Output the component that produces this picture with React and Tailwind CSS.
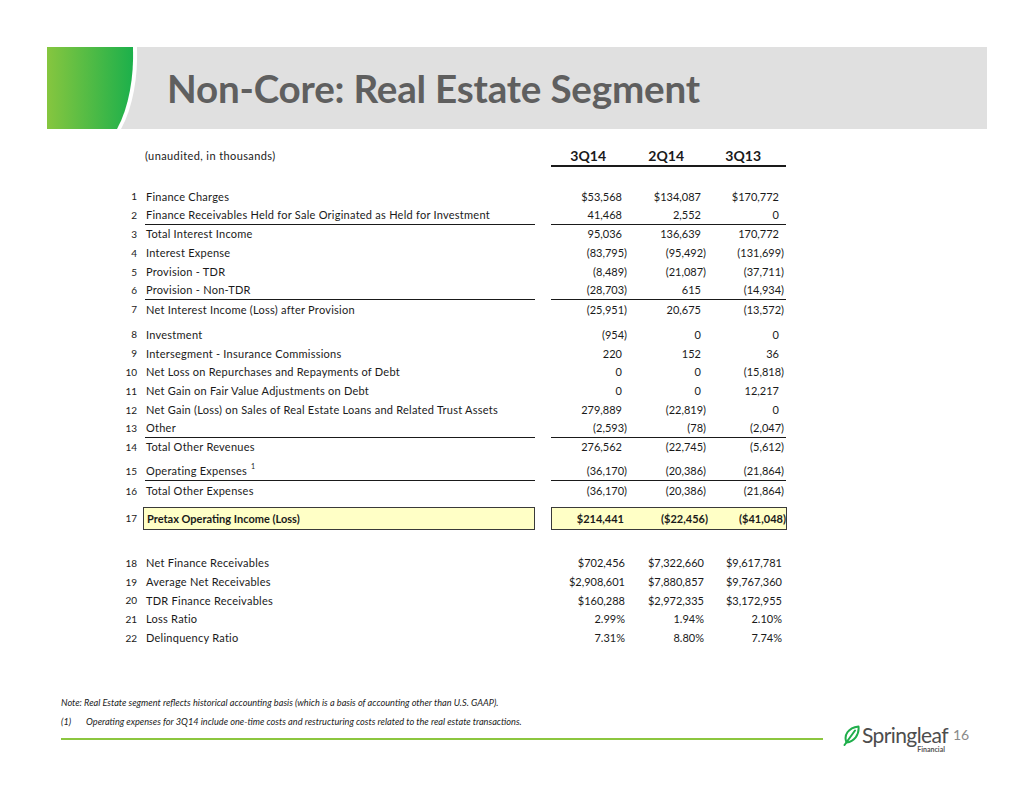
import React from "react";

const rows = [
  { n: 1, label: "Finance Charges", v: ["$53,568", "$134,087", "$170,772"] },
  { n: 2, label: "Finance Receivables Held for Sale Originated as Held for Investment", v: ["41,468", "2,552", "0"], line: true },
  { n: 3, label: "Total Interest Income", v: ["95,036", "136,639", "170,772"] },
  { n: 4, label: "Interest Expense", v: ["(83,795)", "(95,492)", "(131,699)"] },
  { n: 5, label: "Provision - TDR", v: ["(8,489)", "(21,087)", "(37,711)"] },
  { n: 6, label: "Provision - Non-TDR", v: ["(28,703)", "615", "(14,934)"], line: true },
  { n: 7, label: "Net Interest Income (Loss) after Provision", v: ["(25,951)", "20,675", "(13,572)"] },
  { n: 8, label: "Investment", v: ["(954)", "0", "0"], gap: "mt-[6.4px]" },
  { n: 9, label: "Intersegment - Insurance Commissions", v: ["220", "152", "36"] },
  { n: 10, label: "Net Loss on Repurchases and Repayments of Debt", v: ["0", "0", "(15,818)"] },
  { n: 11, label: "Net Gain on Fair Value Adjustments on Debt", v: ["0", "0", "12,217"] },
  { n: 12, label: "Net Gain (Loss) on Sales of Real Estate Loans and Related Trust Assets", v: ["279,889", "(22,819)", "0"] },
  { n: 13, label: "Other", v: ["(2,593)", "(78)", "(2,047)"], line: true },
  { n: 14, label: "Total Other Revenues", v: ["276,562", "(22,745)", "(5,612)"] },
  { n: 15, label: "Operating Expenses", sup: "1", v: ["(36,170)", "(20,386)", "(21,864)"], line: true, gap: "mt-[5px]" },
  { n: 16, label: "Total Other Expenses", v: ["(36,170)", "(20,386)", "(21,864)"], gap: "mt-[1px]" },
];

const stats = [
  { n: 18, label: "Net Finance Receivables", v: ["$702,456", "$7,322,660", "$9,617,781"] },
  { n: 19, label: "Average Net Receivables", v: ["$2,908,601", "$7,880,857", "$9,767,360"] },
  { n: 20, label: "TDR Finance Receivables", v: ["$160,288", "$2,972,335", "$3,172,955"] },
  { n: 21, label: "Loss Ratio", v: ["2.99%", "1.94%", "2.10%"] },
  { n: 22, label: "Delinquency Ratio", v: ["7.31%", "8.80%", "7.74%"] },
];

const colW = ["w-[78px]", "w-[79px]", "w-[78px]"];

// accounting format: positives sit in from the closing paren
const pad = (val, low) => {
  if (val.endsWith(")")) return "pr-[2px]";
  return low ? "pr-[4px]" : "pr-[7px]";
};

function Row({ n, label, sup, v, line, gap = "", low }) {
  return (
    <div className={`flex h-[18.8px] items-stretch text-[11px] ${gap}`}>
      <div className="w-[32px] flex items-center justify-end text-[10px]">{n}</div>
      <div
        className={`ml-[8px] w-[390px] flex items-center pl-[1px] tracking-[0.25px] ${line ? "border-b border-[#1a1a1a]" : ""}`}
      >
        {label}
        {sup && <sup className="ml-[4px] text-[7px] -translate-y-[2px]">{sup}</sup>}
      </div>
      <div className={`ml-[16px] flex ${line ? "border-b border-[#1a1a1a]" : ""}`}>
        {v.map((val, i) => (
          <div key={i} className={`${colW[i]} flex items-center justify-end ${pad(val, low)}`}>
            {val}
          </div>
        ))}
      </div>
    </div>
  );
}

const Leaf = () => (
  <svg width="17" height="21" viewBox="0 0 17 21" fill="none">
    <path
      d="M3.5 17.5 C0.5 10 5 3 15.5 1.5 C16.5 10 11 16.5 3.5 17.5 Z"
      stroke="#1fae4b"
      strokeWidth="2"
      strokeLinejoin="round"
    />
    <path d="M1.5 20 L12 5.5" stroke="#1fae4b" strokeWidth="2" strokeLinecap="round" />
  </svg>
);

export default function App() {
  return (
    <div className="w-[1034px] h-[799px] overflow-hidden bg-white pt-[47px] text-[#1a1a1a] font-['Lato','Open_Sans',sans-serif]">
      {/* Title band */}
      <div className="ml-[47px] w-[940px] h-[82px] bg-[#e0e0e0] flex items-center">
        <svg width="94" height="82" viewBox="0 0 94 82" className="shrink-0">
          <defs>
            <linearGradient id="g" x1="0" x2="1" y1="0" y2="0">
              <stop offset="0" stopColor="#86c63f" />
              <stop offset="1" stopColor="#1cb04b" />
            </linearGradient>
          </defs>
          <path d="M0 0 H90 C91 30 86 60 74 82 H0 Z" fill="#ffffff" />
          <path d="M0 0 H86 C87 30 82 60 70 82 H0 Z" fill="url(#g)" />
        </svg>
        <h1 className="ml-[26px] text-[38.6px] font-bold text-[#5f5f5f] tracking-[-0.2px] leading-none">
          Non-Core: Real Estate Segment
        </h1>
      </div>

      {/* Table */}
      <div className="mt-[17px] ml-[105px]">
        <div className="flex h-[21px] items-center">
          <div className="ml-[40px] w-[390px] text-[11px] tracking-[0.4px]">(unaudited, in thousands)</div>
          <div className="ml-[16px] flex h-full border-b-2 border-[#1a1a1a] text-[14px] font-bold">
            <div className="w-[78px] flex items-center justify-end pr-[23px]">3Q14</div>
            <div className="w-[79px] flex items-center justify-end pr-[24px]">2Q14</div>
            <div className="w-[78px] flex items-center justify-end pr-[25px]">3Q13</div>
          </div>
        </div>

        <div className="mt-[20.6px]">
          {rows.map((r) => (
            <Row key={r.n} {...r} />
          ))}
        </div>

        {/* Pretax row */}
        <div className="mt-[6.6px] flex h-[23px] items-stretch text-[11px]">
          <div className="w-[32px] flex items-center justify-end text-[10px]">17</div>
          <div className="ml-[6px] w-[392px] flex items-center pl-[3px] border border-[#3a3a3a] bg-[#ffffc6] font-bold">
            Pretax Operating Income (Loss)
          </div>
          <div className="ml-[16px] w-[236px] flex border border-[#3a3a3a] bg-[#ffffc6] font-bold">
            <div className="w-[77px] flex items-center justify-end pr-[5px]">$214,441</div>
            <div className="w-[79px] flex items-center justify-end pr-0">($22,456)</div>
            <div className="w-[78px] flex items-center justify-end pr-0">($41,048)</div>
          </div>
        </div>

        <div className="mt-[23.6px]">
          {stats.map((r) => (
            <Row key={r.n} {...r} low />
          ))}
        </div>
      </div>

      {/* Footnotes */}
      <div className="mt-[50px] ml-[61px] text-[9.2px] italic text-[#222] leading-[10px]">
        <p>Note: Real Estate segment reflects historical accounting basis (which is a basis of accounting other than U.S. GAAP).</p>
        <p className="mt-[9px] flex">
          <span className="w-[25px]">(1)</span>
          <span>Operating expenses for 3Q14 include one-time costs and restructuring costs related to the real estate transactions.</span>
        </p>
      </div>

      <div className="ml-[61px] mt-[-2px] flex items-center">
        <div className="w-[762px] h-[1.5px] bg-[#8cc63f]" />
        <div className="ml-[20px] flex items-start">
          <Leaf />
          <div className="ml-[2px] flex flex-col items-end">
            <span className="text-[21px] leading-[20px] text-[#4d4d4d] tracking-[-0.6px]">Springleaf</span>
            <span className="mr-[3px] text-[7px] font-bold leading-[8px] text-[#555]">Financial</span>
          </div>
          <span className="ml-[5px] mt-[2px] text-[14px] leading-[16px] text-[#8a8a8a]">16</span>
        </div>
      </div>
    </div>
  );
}
